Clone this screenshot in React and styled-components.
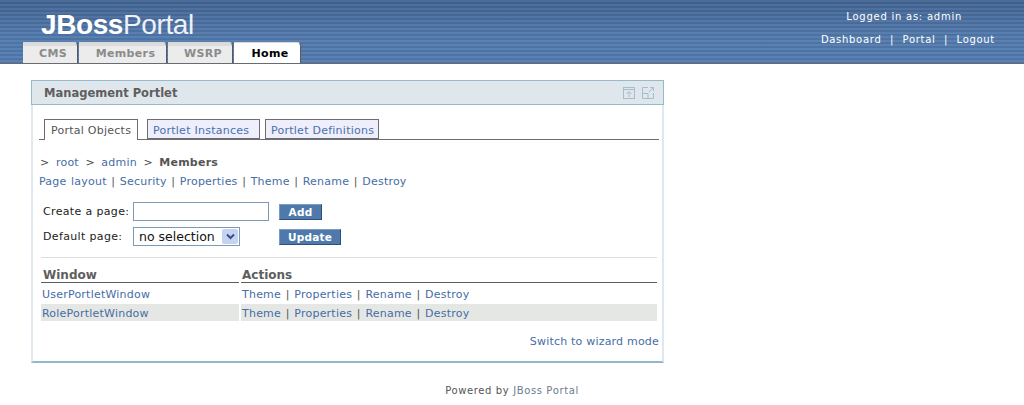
import React from "react";
import styled, { createGlobalStyle } from "styled-components";

const Global = createGlobalStyle`
  html, body { margin: 0; padding: 0; background: #fff; }
  body { font-family: "DejaVu Sans", Verdana, sans-serif; font-size: 11px; color: #4a4a4a; }
`;
const Page = styled.div`width: 1024px; height: 405px; overflow: hidden; display: flex; flex-direction: column;`;
const Header = styled.header`
  height: 64px; box-sizing: border-box; border-bottom: 1px solid #666c72;
  background: repeating-linear-gradient(180deg, rgba(255,255,255,.07) 0, rgba(255,255,255,.07) 2px, rgba(0,0,0,.03) 2px, rgba(0,0,0,.03) 4px),
    linear-gradient(#3f6190, #4f77aa 60%, #4f78ac);
  display: flex; justify-content: space-between; padding-left: 23px;
`;
const Brand = styled.div`display: flex; flex-direction: column;`;
const Logo = styled.div`
  height: 42px; box-sizing: border-box; padding: 9px 0 0 18px; color: #fff;
  font-family: "Liberation Sans", Arial, sans-serif; font-size: 28px; line-height: 32px; letter-spacing: -0.4px;
  b { font-weight: 700; }
  span { font-weight: 400; opacity: .9; }
`;
const Tabs = styled.nav`display: flex; gap: 1px; align-items: flex-end;`;
const Tab = styled.div`
  height: 21px; box-sizing: border-box; width: ${p => p.$w}px; padding-left: 6px; text-align: center;
  background: ${p => p.$active ? "#fff" : "linear-gradient(#dcdcdc 0, #dcdcdc 3px, #ececec 3px)"}; color: ${p => p.$active ? "#000" : "#8b8b8b"};
  border-top: 1px solid #d8d8d8; border-right: 1px solid #5a5a5a;
  border-top-right-radius: 4px; font-weight: 700; font-size: 11px; line-height: 21px; letter-spacing: .35px;
`;
const UserBox = styled.div`
  width: 190px; margin-right: 20px; color: #fff; font-size: 10px; letter-spacing: .7px; text-align: right;
  display: flex; flex-direction: column; align-items: flex-end;
`;
const Logged = styled.div`margin: 10px 42px 0 0; line-height: 14px; letter-spacing: .75px;`;
const UserLinks = styled.div`margin: 9px 9px 0 0; line-height: 14px; white-space: pre; display: flex; gap: 8.5px;`;
const Main = styled.main`padding: 16px 0 0 31px;`;
const Portlet = styled.section`
  width: 633px; height: 283px; box-sizing: border-box; display: flex; flex-direction: column;
  border: solid #dfe8ee; border-width: 0 2px 2px 2px; border-bottom-color: #93b7cc;
`;
const TitleBar = styled.div`
  height: 25px; box-sizing: border-box; margin: 0 -2px; flex: none; background: #dfe7ed;
  border: 1px solid #97b9cc; display: flex; align-items: center; justify-content: space-between; padding: 0 9px 0 12px;
  h2 { margin: 0; font-size: 11.5px; font-weight: 700; color: #5e5e5e; }
`;
const TitleIcons = styled.div`display: flex; gap: 7px;`;
const Body = styled.div`padding: 14px 3px 0 6px; flex: 1; display: flex; flex-direction: column;`;
const ObjTabs = styled.div`display: flex; border-bottom: 1px solid #6d6d6d; padding-left: 5px; height: 20px; box-sizing: content-box; align-items: flex-end;`;
const ObjTab = styled.div`
  width: ${p => p.$w}px; margin-right: ${p => p.$gap}px; flex: none; height: ${p => p.$active ? 21 : 20}px; box-sizing: border-box;
  padding-left: ${p => p.$active ? 6 : 5}px; line-height: 21px; font-size: 11px; letter-spacing: .25px;
  border: 1px solid #6d6d6d; margin-bottom: ${p => p.$active ? -1 : 0}px;
  border-bottom: ${p => p.$active ? "0" : "1px solid #6d6d6d"};
  background: ${p => p.$active ? "#fff" : "#eeeefc"}; color: ${p => p.$active ? "#555" : "#4a72a8"};
`;
const Link = styled.a`color: #466da4; text-decoration: none;`;
const Crumbs = styled.div`margin: 15px 0 0 1px; line-height: 16px; display: flex; gap: 6.5px; letter-spacing: .22px;
  b { color: #555; font-weight: 700; }`;
const Menu = styled.div`margin-top: 3px; line-height: 16px; letter-spacing: .22px; color: #555; word-spacing: .85px;`;
const FormGrid = styled.div`display: grid; grid-template-columns: 90px 146px 1fr; row-gap: 6px; margin: 12px 0 0 4px; align-items: center; color: #222; letter-spacing: .35px;`;
const TextField = styled.div`width: 136px; height: 19px; box-sizing: border-box; border: 1px solid #7c9ab8; background: #fff;`;
const Selector = styled.div`
  width: 107px; height: 19px; box-sizing: border-box; border: 1px solid #7c9ab8; display: flex; align-items: center; justify-content: space-between;
  padding: 0 1px 0 5px; font-size: 12.5px; line-height: 19px; color: #111; letter-spacing: 0;
`;
const Arrow = styled.span`width: 16px; height: 15px; border-radius: 2px; background: #c5d3f2; display: flex; align-items: center; justify-content: center;`;
const Btn = styled.div`
  width: ${p => p.$w}px; height: 16px; box-sizing: border-box; background: #5079ab; color: #fff; font-weight: 700; font-size: 10.5px; letter-spacing: .2px; text-align: center; line-height: 14px;
  border: 1px solid; border-color: #7a9cc4 #2f4f78 #2f4f78 #7a9cc4;
`;
const Rule = styled.hr`margin: 11px 2px 0 2px; border: 0; border-top: 1px solid #d9dddd;`;
const Table = styled.div`display: grid; grid-template-columns: 198px 416px; column-gap: 2px; margin: 8px 0 0 2px;`;
const Head = styled.div`font-weight: 700; font-size: 12px; color: #5e5e5e; height: 16px; line-height: 19px; border-bottom: 1px solid #5e5e5e; padding-left: ${p => p.$first ? 2 : 1}px;`;
const Cell = styled.div`height: 17px; line-height: 19px; padding-left: 1px; margin-top: 2px; background: ${p => p.$alt ? "#e5e7e4" : "#fff"}; letter-spacing: .22px; color: #555; word-spacing: .95px; white-space: pre; overflow: hidden;`;
const Wizard = styled.div`margin-top: 14px; text-align: right; letter-spacing: .2px;`;
const Footer = styled.footer`width: 962px; text-align: center; font-size: 10px; letter-spacing: .62px; color: #555; margin-top: 22px;
  span { color: #6b7c8e; }`;

const Sep = () => " | ";
const Actions = () => (
  <>
    <Link>Theme</Link><Sep /><Link>Properties</Link><Sep /><Link>Rename</Link><Sep /><Link>Destroy</Link>
  </>
);

const ArrowIcon = () => (
  <svg width="9" height="7" viewBox="0 0 9 7"><path d="M1 1.500 L4.500 5 L8 1.500" fill="none" stroke="#3a4f80" strokeWidth="2" /></svg>
);

export default function App() {
  return (
    <Page>
      <Global />
      <Header>
        <Brand>
          <Logo><b>JBoss</b><span>Portal</span></Logo>
          <Tabs>
            <Tab $w={55}>CMS</Tab>
            <Tab $w={88}>Members</Tab>
            <Tab $w={65}>WSRP</Tab>
            <Tab $w={67} $active>Home</Tab>
          </Tabs>
        </Brand>
        <UserBox>
          <Logged>Logged in as: admin</Logged>
          <UserLinks><span>Dashboard</span><span>|</span><span>Portal</span><span>|</span><span>Logout</span></UserLinks>
        </UserBox>
      </Header>
      <Main>
        <Portlet>
          <TitleBar>
            <h2>Management Portlet</h2>
            <TitleIcons>
              <svg width="12" height="12" viewBox="0 0 12 12" fill="none" stroke="#a3bfce"><rect x=".5" y=".5" width="11" height="11" /><path d="M0 2.500H12M6 10V5M3.500 7L6 4.500 8.500 7" /></svg>
              <svg width="12" height="12" viewBox="0 0 12 12" fill="none" stroke="#a3bfce"><path d="M6 .5H.5V11.500H11.500V6M.5 6.500H6V11.500M7 5L11 1M8 .5H11.500V4" /></svg>
            </TitleIcons>
          </TitleBar>
          <Body>
            <ObjTabs>
              <ObjTab $active $w={94} $gap={9}>Portal Objects</ObjTab>
              <ObjTab $w={113} $gap={5}><span>Portlet Instances</span></ObjTab>
              <ObjTab $w={114} $gap={0}><span>Portlet Definitions</span></ObjTab>
            </ObjTabs>
            <Crumbs>
              <span>&gt;</span><Link>root</Link><span>&gt;</span><Link>admin</Link><span>&gt;</span><b>Members</b>
            </Crumbs>
            <Menu>
              <Link>Page layout</Link><Sep /><Link>Security</Link><Sep /><Link>Properties</Link><Sep /><Link>Theme</Link><Sep /><Link>Rename</Link><Sep /><Link>Destroy</Link>
            </Menu>
            <FormGrid>
              <span>Create a page:</span>
              <TextField />
              <Btn $w={43}>Add</Btn>
              <span>Default page:</span>
              <Selector>no selection<Arrow><ArrowIcon /></Arrow></Selector>
              <Btn $w={62}>Update</Btn>
            </FormGrid>
            <Rule />
            <Table>
              <Head $first>Window</Head>
              <Head>Actions</Head>
              <Cell><Link>UserPortletWindow</Link></Cell>
              <Cell><Actions /></Cell>
              <Cell $alt><Link>RolePortletWindow</Link></Cell>
              <Cell $alt><Actions /></Cell>
            </Table>
            <Wizard><Link>Switch to wizard mode</Link></Wizard>
          </Body>
        </Portlet>
        <Footer>Powered by <span>JBoss Portal</span></Footer>
      </Main>
    </Page>
  );
}
